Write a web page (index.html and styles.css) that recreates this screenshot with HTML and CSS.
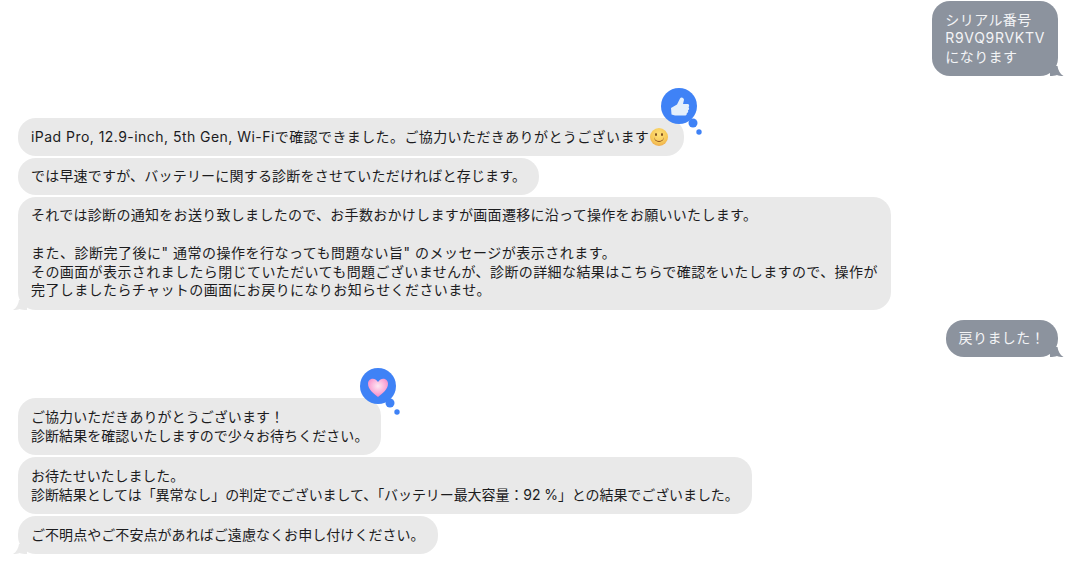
FILE: index.html
```html
<!DOCTYPE html>
<html lang="ja">
<head>
  <meta charset="UTF-8">
  <title>チャット</title>
  <link rel="stylesheet" href="styles.css">
</head>
<body>
  <div class="chat">
    <div class="burbuja enviada">
      シリアル番号<br><span class="ancho">R9VQ9RVKTV</span><br>になります
      <svg class="cola" viewBox="0 0 16 10"><path d="M2 0H9.500C10 4 12 8 15.500 10C12.500 10 10.500 9.800 9 9C7 9.700 4.500 10 2 10Z"/></svg>
    </div>

    <div class="grupo g1">
      <div class="burbuja recibida">
        <span class="ancho-b">iPad Pro, 12.9-inch, 5th Gen, Wi-Fi</span>で確認できました。ご協力いただきありがとうございます<span class="emoji"></span>
        <div class="reaccion">
          <svg viewBox="0 0 42 48">
            <circle cx="19" cy="19" r="18"/>
            <circle cx="33" cy="36" r="4.500"/>
            <circle cx="39" cy="45" r="2.700"/>
            <path class="pulgar" d="M11 21L17 17.500L20 11.500C21 9.500 24 10.500 24 12.800L23 17H27.500C29.500 17 29.500 19.500 28.500 20.200C29.500 21.200 29.300 22.800 28 23.300C28.600 24.500 28 26 26.800 26.200C27 27.600 26 28.500 24.500 28.500H15L11.500 27.500Z"/>
          </svg>
        </div>
      </div>
      <div class="burbuja recibida estrecho-b">では早速ですが、バッテリーに関する診断をさせていただければと存じます。</div>
      <div class="burbuja recibida">
        <span class="estrecho-a">それでは診断の通知をお送り致しましたので、お手数おかけしますが画面遷移に沿って操作をお願いいたします。</span><br><br>
        <span class="ancho-c">また、診断完了後に" 通常の操作を行なっても問題ない旨" のメッセージが表示されます。</span><br>
        その画面が表示されましたら閉じていただいても問題ございませんが、診断の詳細な結果はこちらで確認をいたしますので、操作が<br>
        完了しましたらチャットの画面にお戻りになりお知らせくださいませ。
        <svg class="cola" viewBox="0 0 16 10"><path d="M14 0H6C5.500 4 3.500 8 0 10C3 10 5 9.800 6.500 9C8.500 9.700 11 10 14 10Z"/></svg>
      </div>
    </div>

    <div class="burbuja enviada segunda">
      戻りました！
      <svg class="cola" viewBox="0 0 16 10"><path d="M2 0H9.500C10 4 12 8 15.500 10C12.500 10 10.500 9.800 9 9C7 9.700 4.500 10 2 10Z"/></svg>
    </div>

    <div class="grupo g2">
      <div class="burbuja recibida estrecho-c">
        ご協力いただきありがとうございます！<br>診断結果を確認いたしますので少々お待ちください。
        <div class="reaccion corazon-pos">
          <svg viewBox="0 0 42 48">
            <defs>
              <radialGradient id="rosa" cx="50%" cy="40%" r="65%">
                <stop offset="0%" stop-color="#fde8f3"/>
                <stop offset="55%" stop-color="#fbb0da"/>
                <stop offset="100%" stop-color="#f27fc2"/>
              </radialGradient>
            </defs>
            <circle cx="19" cy="19" r="18"/>
            <circle cx="31" cy="36" r="4.500"/>
            <circle cx="38" cy="45" r="2.700"/>
            <path class="corazon" d="M19 30C14 26 9 22.500 9 16.500C9 12.500 13.500 10.500 16.500 12.500C17.600 13.200 18.500 14.200 19 15C19.500 14.200 20.400 13.200 21.500 12.500C24.500 10.500 29 12.500 29 16.500C29 22.500 24 26 19 30Z"/>
          </svg>
        </div>
      </div>
      <div class="burbuja recibida estrecho-d">お待たせいたしました。<br>診断結果としては「異常なし」の判定でございまして、「バッテリー最大容量：92 %」との結果でございました。</div>
      <div class="burbuja recibida estrecho-c">
        ご不明点やご不安点があればご遠慮なくお申し付けください。
        <svg class="cola" viewBox="0 0 16 10"><path d="M14 0H6C5.500 4 3.500 8 0 10C3 10 5 9.800 6.500 9C8.500 9.700 11 10 14 10Z"/></svg>
      </div>
    </div>
  </div>
</body>
</html>
```

FILE: styles.css
```css
html, body {
  margin: 0;
  padding: 0;
  background: #ffffff;
  overflow: hidden;
}

body {
  width: 1080px;
  height: 561px;
  font-family: Inter, "Noto Sans CJK JP", sans-serif;
  font-size: 14px;
  line-height: 18.750px;
  letter-spacing: 0.4px;
}

.chat {
  display: flex;
  flex-direction: column;
  padding: 1px 22px 0 18px;
}

.grupo {
  display: flex;
  flex-direction: column;
  align-items: flex-start;
  gap: 1.500px;
}

.g1 { margin-top: 42px; }
.g2 { margin-top: 41px; gap: 2.500px; }

.burbuja {
  position: relative;
  padding: 9.500px 13px;
  border-radius: 18px;
  white-space: nowrap;
}

.recibida {
  background: #e9e9e9;
  color: #1c1c1e;
}

.enviada {
  align-self: flex-end;
  background: #8c939e;
  color: #f3f4f6;
}

.segunda { margin-top: 10px; }

/* el espaciado varia de una linea a otra */
.ancho { letter-spacing: 0.7px; }
.ancho-b { letter-spacing: 0.46px; }
.ancho-c { letter-spacing: 0.5px; }
.estrecho-a { letter-spacing: 0.3px; }
.estrecho-b { letter-spacing: 0.2px; }
.estrecho-c { letter-spacing: 0.06px; }
.estrecho-d { letter-spacing: -0.08px; }

.cola {
  position: absolute;
  bottom: 0;
  width: 16px;
  height: 10px;
  overflow: visible;
}

.enviada .cola {
  right: -6px;
  fill: #8c939e;
}

.recibida .cola {
  left: -5px;
  fill: #e9e9e9;
}

.emoji {
  position: relative;
  display: inline-block;
  width: 18px;
  height: 18px;
  margin: 0 3px 0 1px;
  border-radius: 50%;
  vertical-align: -4px;
  background: radial-gradient(circle at 50% 35%, #fde07a 0, #f7c957 55%, #e8964a 100%);
}

.emoji::before {
  content: "";
  position: absolute;
  left: 5px;
  top: 5px;
  width: 2px;
  height: 3px;
  border-radius: 50%;
  background: #7a4a1e;
  box-shadow: 6px 0 0 #7a4a1e;
}

.emoji::after {
  content: "";
  position: absolute;
  left: 4px;
  top: 9px;
  width: 10px;
  height: 5px;
  box-sizing: border-box;
  border-bottom: 1.500px solid #8a4b1f;
  border-radius: 0 0 6px 6px;
}

.reaccion {
  position: absolute;
  top: -31px;
  right: -18px;
  width: 42px;
  height: 48px;
}

.corazon-pos { right: -20px; }

.reaccion svg {
  display: block;
  width: 42px;
  height: 48px;
  fill: #3f82f6;
}

.reaccion .pulgar { fill: #e4effb; }
.reaccion .corazon { fill: url(#rosa); }
```
